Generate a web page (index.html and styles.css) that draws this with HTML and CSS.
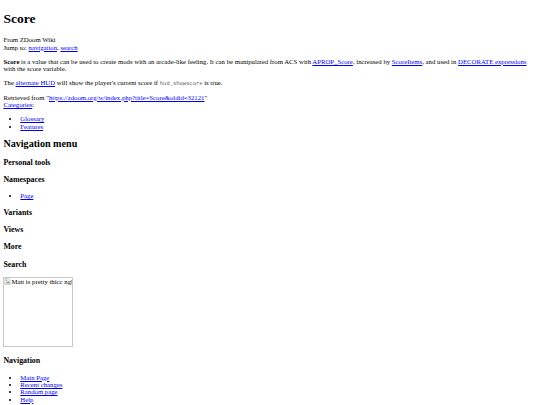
FILE: index.html
```html
<!DOCTYPE html>
<html lang="en">
<head>
    <meta charset="UTF-8">
    <meta name="viewport" content="width=device-width, initial-scale=1.0">
    <title>Score - ZDoom Wiki</title>
    <link rel="stylesheet" href="styles.css">
</head>
<body>
<div id="content">
    <h1 class="first-heading">Score</h1>
    <div class="body-content">
        <div class="site-sub">From ZDoom Wiki</div>
        <div class="jump-to-nav">Jump to: <a href="#mw-navigation">navigation</a>, <a href="#p-search">search</a></div>
        <div class="content-text">
            <p><b>Score</b> is a value that can be used to create mods with an arcade-like feeling. It can be manipulated from ACS with <a href="#">APROP_Score</a>, increased by <a href="#">ScoreItems</a>, and used in <a href="#">DECORATE expressions</a> with the score variable.</p>
            <p>The <a href="#">alternate HUD</a> will show the player's current score if <code>hud_showscore</code> is true.</p>
        </div>
        <div class="printfooter">Retrieved from "<a href="#">https://zdoom.org/w/index.php?title=Score&amp;oldid=32121</a>"</div>
        <div class="catlinks">
            <a href="#">Categories</a>:
            <ul>
                <li><a href="#">Glossary</a></li>
                <li><a href="#">Features</a></li>
            </ul>
        </div>
    </div>
</div>

<div id="mw-navigation">
    <h2>Navigation menu</h2>
    <div class="portlet">
        <h3>Personal tools</h3>
        <ul></ul>
    </div>
    <div class="portlet">
        <h3>Namespaces</h3>
        <ul>
            <li><a href="#">Page</a></li>
        </ul>
    </div>
    <div class="portlet">
        <h3>Variants</h3>
    </div>
    <div class="portlet">
        <h3>Views</h3>
    </div>
    <div class="portlet">
        <h3>More</h3>
    </div>
    <div class="portlet" id="p-search">
        <h3>Search</h3>
    </div>
    <div class="p-logo">
        <a href="#" class="broken-img">
            <svg class="broken-icon" width="7" height="7" viewBox="0 0 16 16">
                <path d="M2 1h9l3 3v11H2z" fill="#f4f4f4" stroke="#9a9a9a"/>
                <path d="M4 12l3-4 2 2 2-3 2 5z" fill="#5aa05a"/>
                <circle cx="6" cy="5" r="1.5" fill="#4a8ad4"/>
            </svg>Matt is pretty thicc ngl
        </a>
    </div>
    <div class="portal">
        <h3>Navigation</h3>
        <ul>
            <li><a href="#">Main Page</a></li>
            <li><a href="#">Recent changes</a></li>
            <li><a href="#">Random page</a></li>
            <li><a href="#">Help</a></li>
        </ul>
    </div>
</div>
</body>
</html>
```

FILE: styles.css
```css
body {
    font-family: "Liberation Serif", "Times New Roman", serif;
    font-size: 6.75px;
    line-height: 1.09;
    margin: 3.4px;
    color: #000;
    background: #fff;
}

a {
    color: #0000ee;
}

ul {
    padding-left: 16.9px;
    margin: 1em 0;
}

code {
    font-family: "Liberation Mono", monospace;
    font-size: 0.8125em;
    color: #666;
}

/* Page content */
.first-heading {
    font-size: 2em;
    margin: 0.67em 0;
}

.content-text p {
    margin: 1em 0;
}

/* Navigation */
#mw-navigation h2 {
    font-size: 1.5em;
    margin: 0.83em 0;
}

#mw-navigation h3 {
    font-size: 1.17em;
    line-height: 9.2px;
    margin: 8.1px 0;
}

.broken-img {
    display: inline-block;
    box-sizing: border-box;
    width: 70px;
    height: 70px;
    border: 1px solid #c8c8c8;
    color: #000;
    text-decoration: none;
    overflow: hidden;
    white-space: nowrap;
    vertical-align: baseline;
}

.broken-icon {
    vertical-align: -1px;
}
```
